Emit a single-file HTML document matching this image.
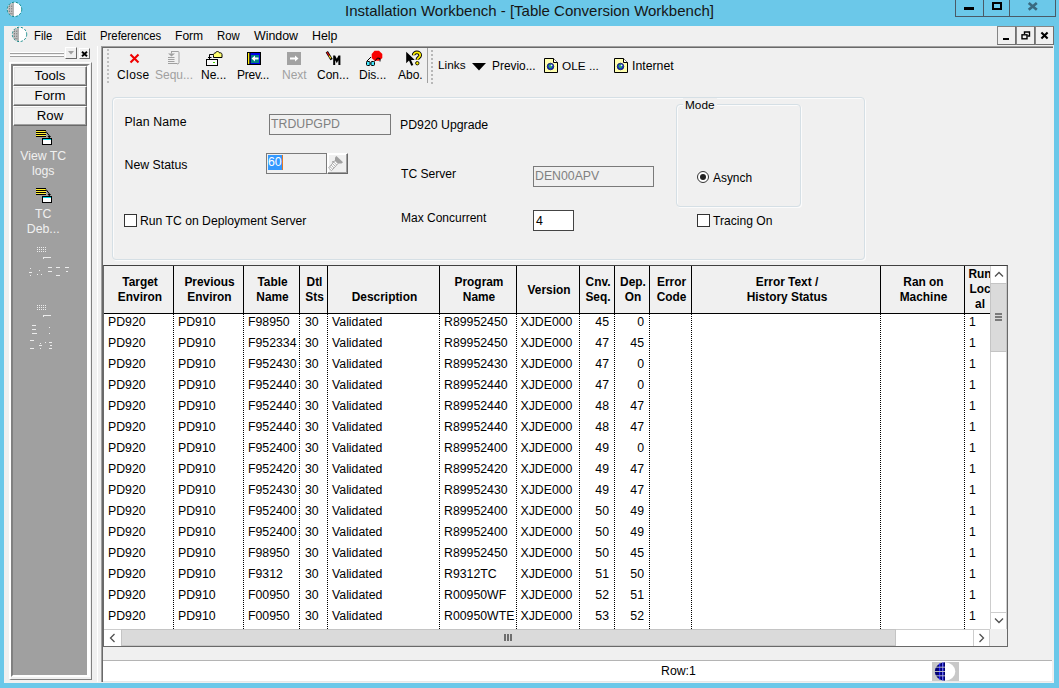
<!DOCTYPE html>
<html>
<head>
<meta charset="utf-8">
<title>Installation Workbench</title>
<style>
html,body{margin:0;padding:0;}
body{width:1059px;height:688px;overflow:hidden;position:relative;background:#6bc8e9;font-family:"Liberation Sans",sans-serif;font-size:12px;color:#000;}
.a{position:absolute;}
.t{position:absolute;white-space:nowrap;line-height:14px;}
#client{left:4px;top:26px;width:1050px;height:657px;background:#f0f0f0;}
#title{left:0;top:2px;width:1059px;text-align:center;font-size:15px;line-height:18px;color:#161616;}
.menu{font-size:12.4px;top:29px;line-height:15px;transform:scaleX(0.915);transform-origin:0 0;}
.tb{font-size:12px;top:68px;line-height:14px;}
.dis{color:#a0a0a0;}
.sbtn{left:13px;width:74px;height:20px;background:#f0f0f0;box-sizing:border-box;text-align:center;font-size:13.2px;line-height:17px;border:1px solid;border-color:#fff #696969 #696969 #fff;box-shadow:inset -1px -1px 0 #a0a0a0, inset 1px 1px 0 #e3e3e3;}
.slab{color:#f0f0f0;text-align:center;left:13px;width:60.400px;font-size:12.3px;line-height:15px;}
.lbl{font-size:12.3px;}
.inp{box-sizing:border-box;background:#fff;border:1px solid #7a7a7a;font-size:12.3px;line-height:14px;}
.chk{width:11px;height:11px;border:1px solid #333;background:#fff;}
.hd{font-weight:bold;font-size:11.9px;line-height:15px;text-align:center;}
.vl{width:1px;top:266px;height:47px;background:#000;}
.dl{width:0;top:314px;height:315px;border-left:1px dotted #000;}
.c{font-size:12.3px;line-height:14px;}
</style>
</head>
<body>
<div id="title" class="t">Installation Workbench - [Table Conversion Workbench]</div>
<svg class="a" style="left:5.5px;top:1px" width="17" height="17" viewBox="0 0 17 17"><circle cx="8.500" cy="8.400" r="7.100" fill="#fff"/><path d="M7.400 1.400A7.100 7.100 0 0 0 7.400 15.400Z" fill="#c0c0c0"/><g fill="#808080"><rect x="3" y="4.600" width="1" height="1.400"/><rect x="5.200" y="4.600" width="1" height="1.400"/><rect x="3" y="7" width="1" height="1.400"/><rect x="5.200" y="7" width="1" height="1.400"/><rect x="3" y="9.600" width="1" height="1.400"/><rect x="5.200" y="9.600" width="1" height="1.400"/><rect x="3.600" y="12" width="1" height="1.200"/><rect x="5.400" y="12" width="1" height="1.400"/><rect x="6.800" y="2" width="0.800" height="13" fill="#909090"/></g><circle cx="8.500" cy="8.400" r="7.200" fill="none" stroke="#008080" stroke-width="0.900" stroke-dasharray="2.200 1.700"/></svg>
<div class="a" style="left:955px;top:0;width:101px;height:17px;border:1px solid #4a5a66;border-top:none;box-sizing:border-box;"></div>
<div class="a" style="left:983px;top:0;width:1px;height:17px;background:#4a5a66"></div>
<div class="a" style="left:1009px;top:0;width:1px;height:17px;background:#4a5a66"></div>
<div class="a" style="left:964px;top:7px;width:10px;height:3px;background:#000"></div>
<div class="a" style="left:992px;top:2px;width:6px;height:4px;border:2px solid #000"></div>
<svg class="a" style="left:1027px;top:1px" width="12" height="10" viewBox="0 0 12 10"><path d="M1.700 2L9.800 8.800M9.800 2L1.700 8.800" stroke="#3a6a80" stroke-width="2.700" fill="none"/></svg>
<div id="client" class="a"></div>
<svg class="a" style="left:10.5px;top:26px" width="17" height="17" viewBox="0 0 17 17"><circle cx="8.500" cy="8.400" r="7.100" fill="#fff"/><path d="M7.400 1.400A7.100 7.100 0 0 0 7.400 15.400Z" fill="#c0c0c0"/><g fill="#808080"><rect x="3" y="4.600" width="1" height="1.400"/><rect x="5.200" y="4.600" width="1" height="1.400"/><rect x="3" y="7" width="1" height="1.400"/><rect x="5.200" y="7" width="1" height="1.400"/><rect x="3" y="9.600" width="1" height="1.400"/><rect x="5.200" y="9.600" width="1" height="1.400"/><rect x="3.600" y="12" width="1" height="1.200"/><rect x="5.400" y="12" width="1" height="1.400"/><rect x="6.800" y="2" width="0.800" height="13" fill="#909090"/></g><circle cx="8.500" cy="8.400" r="7.200" fill="none" stroke="#008080" stroke-width="0.900" stroke-dasharray="2.200 1.700"/></svg>
<div class="t menu" style="left:34px;transform:scaleX(0.915)">File</div>
<div class="t menu" style="left:66px;transform:scaleX(0.93)">Edit</div>
<div class="t menu" style="left:100px;transform:scaleX(0.915)">Preferences</div>
<div class="t menu" style="left:175px;transform:scaleX(0.975)">Form</div>
<div class="t menu" style="left:217px;transform:scaleX(0.915)">Row</div>
<div class="t menu" style="left:254px;transform:scaleX(1.0)">Window</div>
<div class="t menu" style="left:312px;transform:scaleX(1.0)">Help</div>
<div class="a" style="left:997px;top:26px;width:19px;height:19px;box-sizing:border-box;background:#f0f0f0;border:1px solid;border-color:#858585 #707070 #707070 #858585;"></div>
<div class="a" style="left:1016px;top:26px;width:19px;height:19px;box-sizing:border-box;background:#f0f0f0;border:1px solid;border-color:#858585 #707070 #707070 #858585;"></div>
<div class="a" style="left:1035px;top:26px;width:19px;height:19px;box-sizing:border-box;background:#f0f0f0;border:1px solid;border-color:#858585 #707070 #707070 #858585;"></div>
<div class="a" style="left:1003px;top:38px;width:6px;height:2px;background:#000"></div>
<svg class="a" style="left:1021px;top:31px" width="10" height="9" viewBox="0 0 10 9"><path d="M3.5 3V1h5v4h-2" stroke="#000" stroke-width="1.4" fill="none"/><rect x="1" y="3.8" width="5" height="4" stroke="#000" stroke-width="1.4" fill="none"/></svg>
<svg class="a" style="left:1040px;top:31px" width="9" height="9" viewBox="0 0 9 9"><path d="M1.400 1.400L7.600 7.600M7.600 1.400L1.400 7.600" stroke="#000" stroke-width="2.100" fill="none"/></svg>
<div class="a" style="left:10px;top:52px;width:54px;height:1px;background:#fff;border-bottom:1px solid #a0a0a0"></div>
<div class="a" style="left:10px;top:55px;width:54px;height:1px;background:#fff;border-bottom:1px solid #a0a0a0"></div>
<div class="a" style="left:65px;top:47px;width:12px;height:12px;box-sizing:border-box;background:#f0f0f0;border:1px solid;border-color:#fff #696969 #696969 #fff"></div>
<svg class="a" style="left:68px;top:51px" width="6" height="4" viewBox="0 0 6 4"><path d="M0 0h6L3 3.5z" fill="#a0a0a0"/></svg>
<div class="a" style="left:79px;top:48px;width:11px;height:11px;box-sizing:border-box;background:#f0f0f0;border:1px solid;border-color:#fff #696969 #696969 #fff"></div>
<svg class="a" style="left:80.500px;top:50.500px" width="7" height="6" viewBox="0 0 7 6"><path d="M1 0.800L6 5.200M6 0.800L1 5.200" stroke="#000" stroke-width="1.900" fill="none"/></svg>
<div class="a" style="left:9px;top:62px;width:83px;height:618px;box-sizing:border-box;border-style:solid;border-width:1px 1px 1px 2px;border-color:#fff #808080 #808080 #fff;"></div>
<div class="a" style="left:11px;top:64px;width:79px;height:613px;box-sizing:border-box;border-style:solid;border-width:2px 3px 2px 2px;border-color:#808080 #fff #fff #808080;background:#a0a0a0"></div>
<div class="a sbtn" style="top:66px">Tools</div>
<div class="a sbtn" style="top:86px">Form</div>
<div class="a sbtn" style="top:106px">Row</div>
<svg class="a" style="left:35px;top:129px" width="18" height="17" viewBox="0 0 18 17" shape-rendering="crispEdges"><rect x="1" y="1" width="10" height="7" fill="#000"/><rect x="1" y="2" width="10" height="1" fill="#ffee33"/><rect x="1" y="4" width="10" height="1" fill="#ffee33"/><rect x="1" y="6" width="10" height="1" fill="#ffee33"/><path d="M11 2.500L14.500 7" stroke="#000" stroke-width="1" fill="none" shape-rendering="auto"/><path d="M12.500 7h3.500l-1.500 2h-0.500z" fill="#000" shape-rendering="auto"/><rect x="7" y="9" width="10" height="7" fill="#000"/><rect x="8" y="10" width="8" height="1" fill="#00d8e8"/><rect x="8" y="11" width="8" height="4" fill="#fff"/></svg>
<div class="t slab" style="top:149px;white-space:normal">View TC<br>logs</div>
<svg class="a" style="left:35px;top:187px" width="18" height="17" viewBox="0 0 18 17" shape-rendering="crispEdges"><rect x="1" y="1" width="10" height="7" fill="#000"/><rect x="1" y="2" width="10" height="1" fill="#ffee33"/><rect x="1" y="4" width="10" height="1" fill="#ffee33"/><rect x="1" y="6" width="10" height="1" fill="#ffee33"/><path d="M11 2.500L14.500 7" stroke="#000" stroke-width="1" fill="none" shape-rendering="auto"/><path d="M12.500 7h3.500l-1.500 2h-0.500z" fill="#000" shape-rendering="auto"/><rect x="7" y="9" width="10" height="7" fill="#000"/><rect x="8" y="10" width="8" height="1" fill="#00d8e8"/><rect x="8" y="11" width="8" height="4" fill="#fff"/></svg>
<div class="t slab" style="top:207px;white-space:normal">TC<br>Deb...</div>
<svg class="a" style="left:26px;top:245px" width="50" height="34" viewBox="0 0 50 34" shape-rendering="crispEdges" fill="#ececec"><rect x="11" y="2" width="1" height="1"/><rect x="11" y="4" width="1" height="1"/><rect x="11" y="6" width="1" height="1"/><rect x="13" y="2" width="1" height="1"/><rect x="13" y="4" width="1" height="1"/><rect x="13" y="6" width="1" height="1"/><rect x="15" y="2" width="1" height="1"/><rect x="15" y="4" width="1" height="1"/><rect x="15" y="6" width="1" height="1"/><rect x="17" y="2" width="1" height="1"/><rect x="17" y="4" width="1" height="1"/><rect x="17" y="6" width="1" height="1"/><rect x="19" y="2" width="1" height="1"/><rect x="19" y="4" width="1" height="1"/><rect x="19" y="6" width="1" height="1"/><rect x="17" y="12" width="8" height="1"/><rect x="17" y="13" width="1" height="1"/><rect x="4" y="23" width="1" height="1"/><rect x="3" y="27" width="3" height="1"/><rect x="4" y="30" width="1" height="1"/><rect x="11" y="29" width="1" height="1"/><rect x="13" y="25" width="1" height="1"/><rect x="15" y="29" width="1" height="1"/><rect x="22" y="22" width="4" height="1"/><rect x="22" y="26" width="4" height="1"/><rect x="30" y="22" width="4" height="1"/><rect x="30" y="30" width="4" height="1"/><rect x="39" y="22" width="4" height="1"/><rect x="40" y="26" width="2" height="1"/></svg>
<svg class="a" style="left:26px;top:303px" width="50" height="48" viewBox="0 0 50 48" shape-rendering="crispEdges" fill="#ececec"><rect x="11" y="2" width="1" height="1"/><rect x="11" y="4" width="1" height="1"/><rect x="11" y="6" width="1" height="1"/><rect x="13" y="2" width="1" height="1"/><rect x="13" y="4" width="1" height="1"/><rect x="13" y="6" width="1" height="1"/><rect x="15" y="2" width="1" height="1"/><rect x="15" y="4" width="1" height="1"/><rect x="15" y="6" width="1" height="1"/><rect x="17" y="2" width="1" height="1"/><rect x="17" y="4" width="1" height="1"/><rect x="17" y="6" width="1" height="1"/><rect x="19" y="2" width="1" height="1"/><rect x="19" y="4" width="1" height="1"/><rect x="19" y="6" width="1" height="1"/><rect x="17" y="12" width="8" height="1"/><rect x="17" y="13" width="1" height="1"/><rect x="6" y="22" width="4" height="1"/><rect x="6" y="26" width="4" height="1"/><rect x="6" y="30" width="5" height="1"/><rect x="23" y="24" width="1" height="1"/><rect x="23" y="30" width="1" height="1"/><rect x="4" y="37" width="4" height="1"/><rect x="4" y="45" width="4" height="1"/><rect x="14" y="40" width="1" height="1"/><rect x="13" y="42" width="3" height="1"/><rect x="14" y="45" width="1" height="1"/><rect x="19" y="39" width="1" height="1"/><rect x="23" y="39" width="3" height="1"/><rect x="24" y="42" width="2" height="1"/><rect x="23" y="45" width="3" height="1"/></svg>
<div class="a" style="left:97px;top:46px;width:1px;height:636px;background:#fff"></div>
<div class="a" style="left:101px;top:46px;width:952px;height:636px;box-sizing:border-box;border-left:1px solid #a0a0a0;border-top:1px solid #a0a0a0"></div>
<div class="a" style="left:102px;top:47px;width:951px;height:635px;box-sizing:border-box;border-left:1px solid #696969;border-top:1px solid #696969"></div>
<div class="a" style="left:107px;top:49px;width:0;height:34px;border-left:2px dotted #c0c0c0"></div>
<div class="a" style="left:430.500px;top:50px;width:0;height:34px;border-left:2px dotted #b8b8b8"></div>
<div class="a" style="left:427px;top:48px;width:1px;height:35px;background:#a0a0a0"></div>
<div class="t tb" style="left:117px;letter-spacing:0.4px">Close</div>
<div class="t tb dis" style="left:155px;letter-spacing:0px">Sequ...</div>
<div class="t tb" style="left:201px;letter-spacing:0px">Ne...</div>
<div class="t tb" style="left:237px;letter-spacing:-0.25px">Prev...</div>
<div class="t tb dis" style="left:282px;letter-spacing:0px">Next</div>
<div class="t tb" style="left:317px;letter-spacing:0px">Con...</div>
<div class="t tb" style="left:359px;letter-spacing:0px">Dis...</div>
<div class="t tb" style="left:398px;letter-spacing:0px">Abo.</div>
<svg class="a" style="left:129px;top:53px" width="11" height="11" viewBox="0 0 11 11"><path d="M1.500 1.500L9.500 9.500M9.500 1.500L1.500 9.500" stroke="#f00000" stroke-width="2.100" fill="none"/></svg>
<svg class="a" style="left:167px;top:50px" width="13" height="16" viewBox="0 0 13 16"><g stroke="#a0a0a0" fill="none" stroke-width="1"><path d="M4.500 1.500h6.500q1 0 1 1v10q0 1.500-2 1.500"/><path d="M1 7.500h6.500M1 9.500h6.500M1 11.500h6.500M1 13.500h9"/><path d="M4.500 1v2.500"/></g><path d="M1 3.500h7l-3.500 3z" fill="#a0a0a0"/></svg>
<svg class="a" style="left:205px;top:50px" width="18" height="17" viewBox="0 0 18 17"><path d="M4.500 9.500V4.500H8.500" stroke="#000" stroke-width="1" fill="none"/><path d="M3 7.500h3.500" stroke="#000" stroke-width="1"/><path d="M8.500 7.500h8.500v-3c0-1.500-1.500-2-2.500-1.500c-0.500-2-3.500-2-4 0c-1.500 0-2.300 1.200-2 2.500z" fill="#ffff70" stroke="#000" stroke-width="1"/><rect x="1.500" y="9.500" width="11" height="6" fill="#fafafa" stroke="#000" stroke-width="1"/><rect x="8" y="12" width="2" height="1" fill="#40d000"/></svg>
<svg class="a" style="left:247px;top:52px" width="14" height="13" viewBox="0 0 14 13" shape-rendering="crispEdges"><rect width="14" height="13" fill="#000"/><rect x="1" y="1" width="12" height="11" fill="#0000e8"/><rect x="1" y="1" width="1.500" height="11" fill="#ffee00" shape-rendering="auto"/><rect x="2.500" y="1" width="1" height="11" fill="#000" shape-rendering="auto"/><rect x="4" y="2.500" width="8" height="8" fill="#008080"/><path d="M4.500 6.500l3.500-3v2h3.500v2h-3.500v2z" fill="#fff" shape-rendering="auto"/></svg>
<svg class="a" style="left:287px;top:52px" width="14" height="13" viewBox="0 0 14 13"><rect width="14" height="13" fill="#a2a2a2"/><path d="M11.500 6.500l-3.500-3v2h-5v2h5v2z" fill="#fff"/></svg>
<svg class="a" style="left:325px;top:50px" width="17" height="16" viewBox="0 0 17 16"><path d="M1.800 1.800L6.600 9.600" stroke="#000" stroke-width="2.600" fill="none"/><path d="M2 2.200L4.200 5.800" stroke="#f01010" stroke-width="1.200"/><path d="M4.200 5.800L5.800 8.400" stroke="#ffe020" stroke-width="1.200"/><path d="M9.200 15V6.500h0.300l2.300 4.500 2.300-4.500h0.300V15" stroke="#000" stroke-width="2" fill="none" stroke-linejoin="miter"/></svg>
<svg class="a" style="left:365px;top:50px" width="19" height="17" viewBox="0 0 19 17"><path d="M9.500 0.800h4.500l3.300 3.200v4l-3.300 2.800h-4.500l-2.800-2.800v-4z" fill="#f80000"/><path d="M1.500 11.500l4.500-4.500M9.500 11.500l3-3.500 2.500 0.500v3" stroke="#000" stroke-width="1" fill="none"/><rect x="1.500" y="11.500" width="3.500" height="4" rx="1" fill="#40e8ff" stroke="#000" stroke-width="1"/><rect x="6" y="11.500" width="3.500" height="4" rx="1" fill="#40e8ff" stroke="#000" stroke-width="1"/></svg>
<svg class="a" style="left:405px;top:50px" width="18" height="17" viewBox="0 0 18 17"><path d="M1.200 1.800v11.400l2.800-2.600 2.300 5.200 2-0.900-2.300-5h3.800z" fill="#000"/><path d="M8.600 5.200c0-3.800 6.600-3.800 6.600 0 0 2.400-2.900 2.200-2.900 4.600" stroke="#000" stroke-width="3.600" fill="none"/><path d="M8.600 5.200c0-3.800 6.600-3.800 6.600 0 0 2.400-2.900 2.200-2.900 4.600" stroke="#fff000" stroke-width="1.700" fill="none"/><circle cx="12.300" cy="13.200" r="1.700" fill="#fff000" stroke="#000" stroke-width="0.900"/></svg>
<div class="t" style="left:438px;top:58px;font-size:11.800px">Links</div>
<svg class="a" style="left:471.500px;top:63px" width="14" height="8" viewBox="0 0 14 8"><path d="M0 0h14L7 7.500z" fill="#000"/></svg>
<div class="t" style="left:492px;top:59px;font-size:11.900px">Previo...</div>
<svg class="a" style="left:544px;top:58px" width="14" height="15" viewBox="0 0 14 15"><path d="M0.500 0.500h9l4 4v10h-13z" fill="#ffffb0" stroke="#000" stroke-width="1"/><path d="M9.500 0.500v4h4" fill="#fff" stroke="#000" stroke-width="1"/><circle cx="6.500" cy="8.500" r="3.300" fill="#1838c8" stroke="#000850" stroke-width="0.700"/><path d="M4.500 7c1.500-1.200 3-0.200 3.500 1.200s-1.500 2.200-2.700 1.500z" fill="#30b050"/><circle cx="7.600" cy="7.300" r="0.900" fill="#e8f0ff"/></svg>
<div class="t" style="left:562px;top:59px;font-size:11.800px">OLE ...</div>
<svg class="a" style="left:614px;top:58px" width="14" height="15" viewBox="0 0 14 15"><path d="M0.500 0.500h9l4 4v10h-13z" fill="#ffffb0" stroke="#000" stroke-width="1"/><path d="M9.500 0.500v4h4" fill="#fff" stroke="#000" stroke-width="1"/><circle cx="6.500" cy="8.500" r="3.300" fill="#1838c8" stroke="#000850" stroke-width="0.700"/><path d="M4.500 7c1.500-1.200 3-0.200 3.500 1.200s-1.500 2.200-2.700 1.500z" fill="#30b050"/><circle cx="7.600" cy="7.300" r="0.900" fill="#e8f0ff"/></svg>
<div class="t" style="left:632px;top:59px;font-size:12.300px">Internet</div>
<div class="a" style="left:112px;top:97px;width:753px;height:163px;box-sizing:border-box;border:1px solid #d5dfe5;border-radius:4px;box-shadow:inset 1px 1px 0 #fbfbfb, 1px 1px 0 #fbfbfb"></div>
<div class="t lbl" style="left:124.500px;top:115px;letter-spacing:0.150px">Plan Name</div>
<div class="t lbl" style="left:124.500px;top:158px">New Status</div>
<div class="a inp" style="left:269px;top:114px;width:122px;height:21px;background:#f0f0f0;color:#808080;padding:2px 0 0 1px">TRDUPGPD</div>
<div class="t lbl" style="left:400px;top:118px">PD920 Upgrade</div>
<div class="a inp" style="left:266px;top:153px;width:61px;height:21px;background:#f0f0f0;border-color:#7a7a7a"></div>
<div class="t" style="left:268px;top:155px;font-size:12.3px;line-height:15px;background:#3399ff;color:#fff;height:15px;">60</div>
<div class="a" style="left:282px;top:155px;width:1px;height:15px;background:#e07828"></div>
<div class="a" style="left:327px;top:153px;width:21px;height:21px;box-sizing:border-box;background:#f0f0f0;border:1px solid;border-color:#fff #696969 #696969 #fff;box-shadow:inset -1px -1px 0 #a0a0a0,inset 1px 1px 0 #fff"></div>
<svg class="a" style="left:328px;top:154px" width="18" height="18" viewBox="0 0 18 18"><path d="M7 6.500L10 9.600L3.500 16.700L0.600 14Z" fill="#fff" stroke="#a4a4a4" stroke-width="0.900"/><path d="M5.700 8L8.700 11M4.400 9.500L7.400 12.400M3.100 11L6.100 13.900M1.800 12.500L4.800 15.300" stroke="#a4a4a4" stroke-width="0.900"/><path d="M4.200 7.200L6.500 7L5.500 8.500L3.800 8.600Z" fill="#a0a0a0"/><path d="M7 3.500L8.400 2L15 8.300L13.500 9.600L10 9.600L7 6.500Z" fill="#a0a0a0"/></svg>
<div class="t lbl" style="left:401px;top:167px;font-size:12.1px">TC Server</div>
<div class="a inp" style="left:533px;top:166px;width:121px;height:21px;background:#f0f0f0;color:#808080;padding:2px 0 0 1px">DEN00APV</div>
<div class="t lbl" style="left:401px;top:211px;font-size:12px">Max Concurrent</div>
<div class="a inp" style="left:533px;top:210px;width:41px;height:21px;padding:3px 0 0 2px;border-color:#444">4</div>
<div class="a chk" style="left:124px;top:214px"></div>
<div class="t lbl" style="left:140px;top:214px;font-size:12.2px">Run TC on Deployment Server</div>
<div class="a" style="left:676px;top:104px;width:125px;height:103px;box-sizing:border-box;border:1px solid #d5dfe5;border-radius:4px;box-shadow:inset 1px 1px 0 #fbfbfb, 1px 1px 0 #fbfbfb"></div>
<div class="t lbl" style="left:683px;top:98px;background:#f0f0f0;padding:0 2px;font-size:11.800px">Mode</div>
<div class="a" style="left:697px;top:171px;width:10px;height:10px;border:1px solid #333;border-radius:50%;background:#fff"></div>
<div class="a" style="left:700px;top:174px;width:6px;height:6px;border-radius:50%;background:#222"></div>
<div class="t lbl" style="left:713px;top:171px;font-size:11.900px">Asynch</div>
<div class="a chk" style="left:697px;top:214px"></div>
<div class="t lbl" style="left:713px;top:214px;font-size:12.100px">Tracing On</div>
<div class="a" style="left:103px;top:265px;width:905px;height:382px;box-sizing:border-box;background:#fff;border:1px solid #696969;border-top-color:#404040"></div>
<div class="a" style="left:104px;top:266px;width:886px;height:47px;background:#f0f0f0"></div>
<div class="a" style="left:104px;top:313px;width:886px;height:1px;background:#000"></div>
<div class="a vl" style="left:173px"></div>
<div class="a dl" style="left:173px"></div>
<div class="a vl" style="left:243px"></div>
<div class="a dl" style="left:243px"></div>
<div class="a vl" style="left:299px"></div>
<div class="a dl" style="left:299px"></div>
<div class="a vl" style="left:327px"></div>
<div class="a dl" style="left:327px"></div>
<div class="a vl" style="left:439px"></div>
<div class="a dl" style="left:439px"></div>
<div class="a vl" style="left:516px"></div>
<div class="a dl" style="left:516px"></div>
<div class="a vl" style="left:579px"></div>
<div class="a dl" style="left:579px"></div>
<div class="a vl" style="left:614px"></div>
<div class="a dl" style="left:614px"></div>
<div class="a vl" style="left:649px"></div>
<div class="a dl" style="left:649px"></div>
<div class="a vl" style="left:691px"></div>
<div class="a dl" style="left:691px"></div>
<div class="a vl" style="left:880px"></div>
<div class="a dl" style="left:880px"></div>
<div class="a vl" style="left:964px"></div>
<div class="a dl" style="left:964px"></div>
<div class="t hd" style="left:106px;width:68px;top:275px">Target<br>Environ</div>
<div class="t hd" style="left:175px;width:69px;top:275px">Previous<br>Environ</div>
<div class="t hd" style="left:245px;width:55px;top:275px">Table<br>Name</div>
<div class="t hd" style="left:301px;width:27px;top:275px">Dtl<br>Sts</div>
<div class="t hd" style="left:329px;width:111px;top:290px">Description</div>
<div class="t hd" style="left:441px;width:76px;top:275px">Program<br>Name</div>
<div class="t hd" style="left:518px;width:62px;top:283px">Version</div>
<div class="t hd" style="left:581px;width:34px;top:275px">Cnv.<br>Seq.</div>
<div class="t hd" style="left:616px;width:34px;top:275px">Dep.<br>On</div>
<div class="t hd" style="left:651px;width:41px;top:275px">Error<br>Code</div>
<div class="t hd" style="left:693px;width:188px;top:275px">Error Text /<br>History Status</div>
<div class="t hd" style="left:882px;width:83px;top:275px">Ran on<br>Machine</div>
<div class="a" style="left:965px;top:266px;width:25px;height:47px;overflow:hidden"><div class="t hd" style="left:0;width:30px;top:1px;line-height:15px">Run<br>Loc<br>al</div></div>
<div class="t c" style="left:108px;top:315px">PD920</div>
<div class="t c" style="left:178px;top:315px">PD910</div>
<div class="t c" style="left:248px;top:315px">F98950</div>
<div class="t c" style="left:305px;top:315px">30</div>
<div class="t c" style="left:332px;top:315px">Validated</div>
<div class="t c" style="left:444px;top:315px">R89952450</div>
<div class="t c" style="left:520.5px;top:315px">XJDE000</div>
<div class="t c" style="left:581px;width:28px;text-align:right;top:315px">45</div>
<div class="t c" style="left:616px;width:28px;text-align:right;top:315px">0</div>
<div class="t c" style="left:969px;top:315px">1</div>
<div class="t c" style="left:108px;top:336px">PD920</div>
<div class="t c" style="left:178px;top:336px">PD910</div>
<div class="t c" style="left:248px;top:336px">F952334</div>
<div class="t c" style="left:305px;top:336px">30</div>
<div class="t c" style="left:332px;top:336px">Validated</div>
<div class="t c" style="left:444px;top:336px">R89952450</div>
<div class="t c" style="left:520.5px;top:336px">XJDE000</div>
<div class="t c" style="left:581px;width:28px;text-align:right;top:336px">47</div>
<div class="t c" style="left:616px;width:28px;text-align:right;top:336px">45</div>
<div class="t c" style="left:969px;top:336px">1</div>
<div class="t c" style="left:108px;top:357px">PD920</div>
<div class="t c" style="left:178px;top:357px">PD910</div>
<div class="t c" style="left:248px;top:357px">F952430</div>
<div class="t c" style="left:305px;top:357px">30</div>
<div class="t c" style="left:332px;top:357px">Validated</div>
<div class="t c" style="left:444px;top:357px">R89952430</div>
<div class="t c" style="left:520.5px;top:357px">XJDE000</div>
<div class="t c" style="left:581px;width:28px;text-align:right;top:357px">47</div>
<div class="t c" style="left:616px;width:28px;text-align:right;top:357px">0</div>
<div class="t c" style="left:969px;top:357px">1</div>
<div class="t c" style="left:108px;top:378px">PD920</div>
<div class="t c" style="left:178px;top:378px">PD910</div>
<div class="t c" style="left:248px;top:378px">F952440</div>
<div class="t c" style="left:305px;top:378px">30</div>
<div class="t c" style="left:332px;top:378px">Validated</div>
<div class="t c" style="left:444px;top:378px">R89952440</div>
<div class="t c" style="left:520.5px;top:378px">XJDE000</div>
<div class="t c" style="left:581px;width:28px;text-align:right;top:378px">47</div>
<div class="t c" style="left:616px;width:28px;text-align:right;top:378px">0</div>
<div class="t c" style="left:969px;top:378px">1</div>
<div class="t c" style="left:108px;top:399px">PD920</div>
<div class="t c" style="left:178px;top:399px">PD910</div>
<div class="t c" style="left:248px;top:399px">F952440</div>
<div class="t c" style="left:305px;top:399px">30</div>
<div class="t c" style="left:332px;top:399px">Validated</div>
<div class="t c" style="left:444px;top:399px">R89952440</div>
<div class="t c" style="left:520.5px;top:399px">XJDE000</div>
<div class="t c" style="left:581px;width:28px;text-align:right;top:399px">48</div>
<div class="t c" style="left:616px;width:28px;text-align:right;top:399px">47</div>
<div class="t c" style="left:969px;top:399px">1</div>
<div class="t c" style="left:108px;top:420px">PD920</div>
<div class="t c" style="left:178px;top:420px">PD910</div>
<div class="t c" style="left:248px;top:420px">F952440</div>
<div class="t c" style="left:305px;top:420px">30</div>
<div class="t c" style="left:332px;top:420px">Validated</div>
<div class="t c" style="left:444px;top:420px">R89952440</div>
<div class="t c" style="left:520.5px;top:420px">XJDE000</div>
<div class="t c" style="left:581px;width:28px;text-align:right;top:420px">48</div>
<div class="t c" style="left:616px;width:28px;text-align:right;top:420px">47</div>
<div class="t c" style="left:969px;top:420px">1</div>
<div class="t c" style="left:108px;top:441px">PD920</div>
<div class="t c" style="left:178px;top:441px">PD910</div>
<div class="t c" style="left:248px;top:441px">F952400</div>
<div class="t c" style="left:305px;top:441px">30</div>
<div class="t c" style="left:332px;top:441px">Validated</div>
<div class="t c" style="left:444px;top:441px">R89952400</div>
<div class="t c" style="left:520.5px;top:441px">XJDE000</div>
<div class="t c" style="left:581px;width:28px;text-align:right;top:441px">49</div>
<div class="t c" style="left:616px;width:28px;text-align:right;top:441px">0</div>
<div class="t c" style="left:969px;top:441px">1</div>
<div class="t c" style="left:108px;top:462px">PD920</div>
<div class="t c" style="left:178px;top:462px">PD910</div>
<div class="t c" style="left:248px;top:462px">F952420</div>
<div class="t c" style="left:305px;top:462px">30</div>
<div class="t c" style="left:332px;top:462px">Validated</div>
<div class="t c" style="left:444px;top:462px">R89952420</div>
<div class="t c" style="left:520.5px;top:462px">XJDE000</div>
<div class="t c" style="left:581px;width:28px;text-align:right;top:462px">49</div>
<div class="t c" style="left:616px;width:28px;text-align:right;top:462px">47</div>
<div class="t c" style="left:969px;top:462px">1</div>
<div class="t c" style="left:108px;top:483px">PD920</div>
<div class="t c" style="left:178px;top:483px">PD910</div>
<div class="t c" style="left:248px;top:483px">F952430</div>
<div class="t c" style="left:305px;top:483px">30</div>
<div class="t c" style="left:332px;top:483px">Validated</div>
<div class="t c" style="left:444px;top:483px">R89952430</div>
<div class="t c" style="left:520.5px;top:483px">XJDE000</div>
<div class="t c" style="left:581px;width:28px;text-align:right;top:483px">49</div>
<div class="t c" style="left:616px;width:28px;text-align:right;top:483px">47</div>
<div class="t c" style="left:969px;top:483px">1</div>
<div class="t c" style="left:108px;top:504px">PD920</div>
<div class="t c" style="left:178px;top:504px">PD910</div>
<div class="t c" style="left:248px;top:504px">F952400</div>
<div class="t c" style="left:305px;top:504px">30</div>
<div class="t c" style="left:332px;top:504px">Validated</div>
<div class="t c" style="left:444px;top:504px">R89952400</div>
<div class="t c" style="left:520.5px;top:504px">XJDE000</div>
<div class="t c" style="left:581px;width:28px;text-align:right;top:504px">50</div>
<div class="t c" style="left:616px;width:28px;text-align:right;top:504px">49</div>
<div class="t c" style="left:969px;top:504px">1</div>
<div class="t c" style="left:108px;top:525px">PD920</div>
<div class="t c" style="left:178px;top:525px">PD910</div>
<div class="t c" style="left:248px;top:525px">F952400</div>
<div class="t c" style="left:305px;top:525px">30</div>
<div class="t c" style="left:332px;top:525px">Validated</div>
<div class="t c" style="left:444px;top:525px">R89952400</div>
<div class="t c" style="left:520.5px;top:525px">XJDE000</div>
<div class="t c" style="left:581px;width:28px;text-align:right;top:525px">50</div>
<div class="t c" style="left:616px;width:28px;text-align:right;top:525px">49</div>
<div class="t c" style="left:969px;top:525px">1</div>
<div class="t c" style="left:108px;top:546px">PD920</div>
<div class="t c" style="left:178px;top:546px">PD910</div>
<div class="t c" style="left:248px;top:546px">F98950</div>
<div class="t c" style="left:305px;top:546px">30</div>
<div class="t c" style="left:332px;top:546px">Validated</div>
<div class="t c" style="left:444px;top:546px">R89952450</div>
<div class="t c" style="left:520.5px;top:546px">XJDE000</div>
<div class="t c" style="left:581px;width:28px;text-align:right;top:546px">50</div>
<div class="t c" style="left:616px;width:28px;text-align:right;top:546px">45</div>
<div class="t c" style="left:969px;top:546px">1</div>
<div class="t c" style="left:108px;top:567px">PD920</div>
<div class="t c" style="left:178px;top:567px">PD910</div>
<div class="t c" style="left:248px;top:567px">F9312</div>
<div class="t c" style="left:305px;top:567px">30</div>
<div class="t c" style="left:332px;top:567px">Validated</div>
<div class="t c" style="left:444px;top:567px">R9312TC</div>
<div class="t c" style="left:520.5px;top:567px">XJDE000</div>
<div class="t c" style="left:581px;width:28px;text-align:right;top:567px">51</div>
<div class="t c" style="left:616px;width:28px;text-align:right;top:567px">50</div>
<div class="t c" style="left:969px;top:567px">1</div>
<div class="t c" style="left:108px;top:588px">PD920</div>
<div class="t c" style="left:178px;top:588px">PD910</div>
<div class="t c" style="left:248px;top:588px">F00950</div>
<div class="t c" style="left:305px;top:588px">30</div>
<div class="t c" style="left:332px;top:588px">Validated</div>
<div class="t c" style="left:444px;top:588px">R00950WF</div>
<div class="t c" style="left:520.5px;top:588px">XJDE000</div>
<div class="t c" style="left:581px;width:28px;text-align:right;top:588px">52</div>
<div class="t c" style="left:616px;width:28px;text-align:right;top:588px">51</div>
<div class="t c" style="left:969px;top:588px">1</div>
<div class="t c" style="left:108px;top:609px">PD920</div>
<div class="t c" style="left:178px;top:609px">PD910</div>
<div class="t c" style="left:248px;top:609px">F00950</div>
<div class="t c" style="left:305px;top:609px">30</div>
<div class="t c" style="left:332px;top:609px">Validated</div>
<div class="t c" style="left:444px;top:609px">R00950WTE</div>
<div class="t c" style="left:520.5px;top:609px">XJDE000</div>
<div class="t c" style="left:581px;width:28px;text-align:right;top:609px">53</div>
<div class="t c" style="left:616px;width:28px;text-align:right;top:609px">52</div>
<div class="t c" style="left:969px;top:609px">1</div>
<div class="a" style="left:990px;top:266px;width:17px;height:363px;background:#fff;border-left:1px solid #cdcdcd;border-right:1px solid #cdcdcd;box-sizing:border-box"></div>
<div class="a" style="left:990px;top:283px;width:17px;height:69px;box-sizing:border-box;background:#dadada;border:1px solid #c4c4c4"></div>
<div class="a" style="left:995px;top:313px;width:7px;height:2px;background:#7a7a7a;box-shadow:0 3px 0 #7a7a7a,0 6px 0 #7a7a7a"></div>
<svg class="a" style="left:994px;top:271px" width="10" height="6" viewBox="0 0 10 6"><path d="M1 5.500L5 1.500L9 5.500" stroke="#505050" stroke-width="1.300" fill="none"/></svg>
<div class="a" style="left:991px;top:612px;width:16px;height:1px;background:#cdcdcd"></div>
<svg class="a" style="left:994px;top:618px" width="10" height="6" viewBox="0 0 10 6"><path d="M1 0.500L5 4.500L9 0.500" stroke="#505050" stroke-width="1.300" fill="none"/></svg>
<div class="a" style="left:104px;top:629px;width:886px;height:17px;background:#fff;border-top:1px solid #cdcdcd;border-right:1px solid #cdcdcd;box-sizing:border-box"></div>
<div class="a" style="left:121px;top:629px;width:775px;height:17px;box-sizing:border-box;background:#dadada;border:1px solid #c4c4c4"></div>
<div class="a" style="left:504px;top:634px;width:2px;height:7px;background:#6e6e6e;box-shadow:3px 0 0 #6e6e6e,6px 0 0 #6e6e6e"></div>
<svg class="a" style="left:109px;top:633px" width="6" height="10" viewBox="0 0 6 10"><path d="M5.500 1L1.500 5L5.500 9" stroke="#505050" stroke-width="1.300" fill="none"/></svg>
<div class="a" style="left:973px;top:630px;width:1px;height:16px;background:#cdcdcd"></div>
<svg class="a" style="left:979px;top:633px" width="6" height="10" viewBox="0 0 6 10"><path d="M0.500 1L4.500 5L0.500 9" stroke="#505050" stroke-width="1.300" fill="none"/></svg>
<div class="a" style="left:990px;top:629px;width:17px;height:17px;background:#f0f0f0"></div>
<div class="a" style="left:103px;top:660px;width:949px;height:22px;box-sizing:border-box;background:#fff;border-top:1px solid #b4b4b4;border-bottom:1px solid #e8e8e8"></div>
<div class="t" style="left:661px;top:664px;font-size:12.3px">Row:1</div>
<div class="a" style="left:932px;top:662px;width:27px;height:19px;background:#c8c8c8"></div>
<svg class="a" style="left:932px;top:662px" width="27" height="19" viewBox="0 0 27 19"><ellipse cx="13" cy="9.500" rx="10.300" ry="9.200" fill="#fff"/><path d="M13 0.300A10.300 9.200 0 0 0 13 18.700Z" fill="#000070"/><path d="M7.600 1.500v16" stroke="#2828ff" stroke-width="1.300"/><path d="M10.700 0.500v18" stroke="#6868ff" stroke-width="1.300"/><path d="M2.500 5.200h10.500M2 9.500h11M2.500 13.800h10.500" stroke="#c8c8c8" stroke-width="0.900"/></svg>
</body>
</html>
